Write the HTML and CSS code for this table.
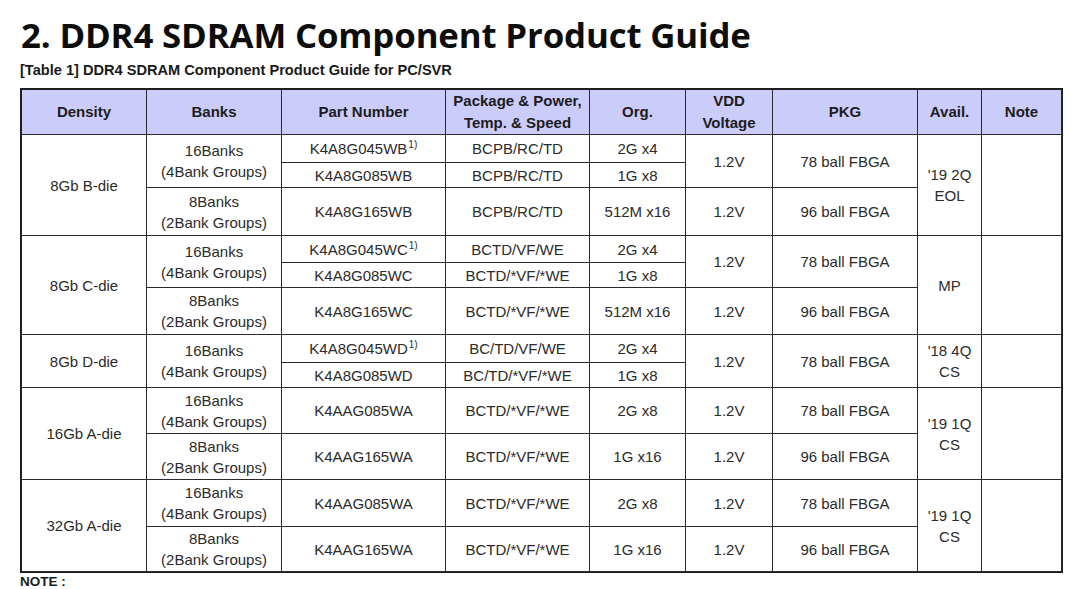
FILE: index.html
```html
<!DOCTYPE html>
<html lang="en">
<head>
<meta charset="utf-8">
<title>DDR4 SDRAM Component Product Guide</title>
<link rel="stylesheet" href="styles.css">
</head>
<body>
<div class="page">
  <h1 class="title">2. DDR4 SDRAM Component Product Guide</h1>
  <p class="caption">[Table 1] DDR4 SDRAM Component Product Guide for PC/SVR</p>
  <table class="guide">
    <colgroup>
      <col class="c-density"><col class="c-banks"><col class="c-part"><col class="c-pkgpow">
      <col class="c-org"><col class="c-vdd"><col class="c-pkg"><col class="c-avail"><col class="c-note">
    </colgroup>
    <thead>
      <tr class="h44">
        <th>Density</th><th>Banks</th><th>Part Number</th><th>Package &amp; Power,<br>Temp. &amp; Speed</th>
        <th>Org.</th><th>VDD<br>Voltage</th><th>PKG</th><th>Avail.</th><th>Note</th>
      </tr>
    </thead>
    <tbody>
      <tr class="h28">
        <td rowspan="3">8Gb B-die</td>
        <td rowspan="2">16Banks<br>(4Bank Groups)</td>
        <td><span class="pn">K4A8G045WB<sup>1)</sup></span></td>
        <td>BCPB/RC/TD</td><td>2G x4</td>
        <td rowspan="2">1.2V</td><td rowspan="2">78 ball FBGA</td>
        <td rowspan="3">'19 2Q<br>EOL</td><td rowspan="3"></td>
      </tr>
      <tr class="h25">
        <td>K4A8G085WB</td><td>BCPB/RC/TD</td><td>1G x8</td>
      </tr>
      <tr class="h48">
        <td>8Banks<br>(2Bank Groups)</td>
        <td>K4A8G165WB</td><td>BCPB/RC/TD</td><td>512M x16</td><td>1.2V</td><td>96 ball FBGA</td>
      </tr>

      <tr class="h27">
        <td rowspan="3">8Gb C-die</td>
        <td rowspan="2">16Banks<br>(4Bank Groups)</td>
        <td><span class="pn">K4A8G045WC<sup>1)</sup></span></td>
        <td>BCTD/VF/WE</td><td>2G x4</td>
        <td rowspan="2">1.2V</td><td rowspan="2">78 ball FBGA</td>
        <td rowspan="3">MP</td><td rowspan="3"></td>
      </tr>
      <tr class="h25">
        <td>K4A8G085WC</td><td>BCTD/*VF/*WE</td><td>1G x8</td>
      </tr>
      <tr class="h47">
        <td>8Banks<br>(2Bank Groups)</td>
        <td>K4A8G165WC</td><td>BCTD/*VF/*WE</td><td>512M x16</td><td>1.2V</td><td>96 ball FBGA</td>
      </tr>

      <tr class="h28">
        <td rowspan="2">8Gb D-die</td>
        <td rowspan="2">16Banks<br>(4Bank Groups)</td>
        <td><span class="pn">K4A8G045WD<sup>1)</sup></span></td>
        <td>BC/TD/VF/WE</td><td>2G x4</td>
        <td rowspan="2">1.2V</td><td rowspan="2">78 ball FBGA</td>
        <td rowspan="2">'18 4Q<br>CS</td><td rowspan="2"></td>
      </tr>
      <tr class="h25">
        <td>K4A8G085WD</td><td>BC/TD/*VF/*WE</td><td>1G x8</td>
      </tr>

      <tr class="h46">
        <td rowspan="2">16Gb A-die</td>
        <td>16Banks<br>(4Bank Groups)</td>
        <td>K4AAG085WA</td><td>BCTD/*VF/*WE</td><td>2G x8</td><td>1.2V</td><td>78 ball FBGA</td>
        <td rowspan="2">'19 1Q<br>CS</td><td rowspan="2"></td>
      </tr>
      <tr class="h46">
        <td>8Banks<br>(2Bank Groups)</td>
        <td>K4AAG165WA</td><td>BCTD/*VF/*WE</td><td>1G x16</td><td>1.2V</td><td>96 ball FBGA</td>
      </tr>

      <tr class="h47">
        <td rowspan="2">32Gb A-die</td>
        <td>16Banks<br>(4Bank Groups)</td>
        <td>K4AAG085WA</td><td>BCTD/*VF/*WE</td><td>2G x8</td><td>1.2V</td><td>78 ball FBGA</td>
        <td rowspan="2">'19 1Q<br>CS</td><td rowspan="2"></td>
      </tr>
      <tr class="h45">
        <td>8Banks<br>(2Bank Groups)</td>
        <td>K4AAG165WA</td><td>BCTD/*VF/*WE</td><td>1G x16</td><td>1.2V</td><td>96 ball FBGA</td>
      </tr>
    </tbody>
  </table>
  <p class="note">NOTE :</p>
</div>
</body>
</html>
```

FILE: styles.css
```css
html, body {
  margin: 0;
  padding: 0;
  background: #ffffff;
}

body {
  font-family: "Liberation Sans", Arial, sans-serif;
  color: #2a2a2a;
}

.page {
  padding: 15px 0 0 20px;
}

.title {
  margin: 0;
  padding-left: 1px;
  font-family: "Open Sans", "Noto Sans", sans-serif;
  font-weight: 700;
  font-size: 34.8px;
  line-height: 40px;
  letter-spacing: -0.15px;
  color: #0d0d0d;
}

.caption {
  margin: 7px 0 0 0;
  font-size: 14.6px;
  line-height: 16px;
  font-weight: 700;
  color: #1a1a1a;
}

.guide {
  margin-top: 10px;
  width: 1043px;
  table-layout: fixed;
  border-collapse: separate;
  border-spacing: 0;
  border-style: solid;
  border-color: #1e1e1e;
  border-width: 2px 1px 1px 2px;
  font-size: 15px;
  line-height: 21px;
}

.c-density { width: 125px; }
.c-banks   { width: 135px; }
.c-part    { width: 164px; }
.c-pkgpow  { width: 144px; }
.c-org     { width: 96px; }
.c-vdd     { width: 87px; }
.c-pkg     { width: 145px; }
.c-avail   { width: 64px; }
.c-note    { width: 80px; }

.guide th,
.guide td {
  padding: 0;
  text-align: center;
  vertical-align: middle;
  border-right: 1px solid #2a2a2a;
  border-bottom: 1px solid #2a2a2a;
  white-space: nowrap;
}

.guide th {
  background: #ccccfb;
  font-weight: 700;
  color: #1c1c1c;
  line-height: 22px;
}

.guide td {
  color: #2b2b2b;
}

.guide sup {
  font-size: 10px;
  line-height: 0;
  vertical-align: 6px;
  margin-left: 1px;
}

.h44 { height: 44px; }
.h25 { height: 25px; }
.h27 { height: 27px; }
.h28 { height: 28px; }
.h45 { height: 45px; }
.h46 { height: 46px; }
.h47 { height: 47px; }
.h48 { height: 48px; }

.note {
  margin: 1px 0 0 0;
  font-size: 13.5px;
  line-height: 16px;
  font-weight: 700;
  color: #1a1a1a;
}
```
